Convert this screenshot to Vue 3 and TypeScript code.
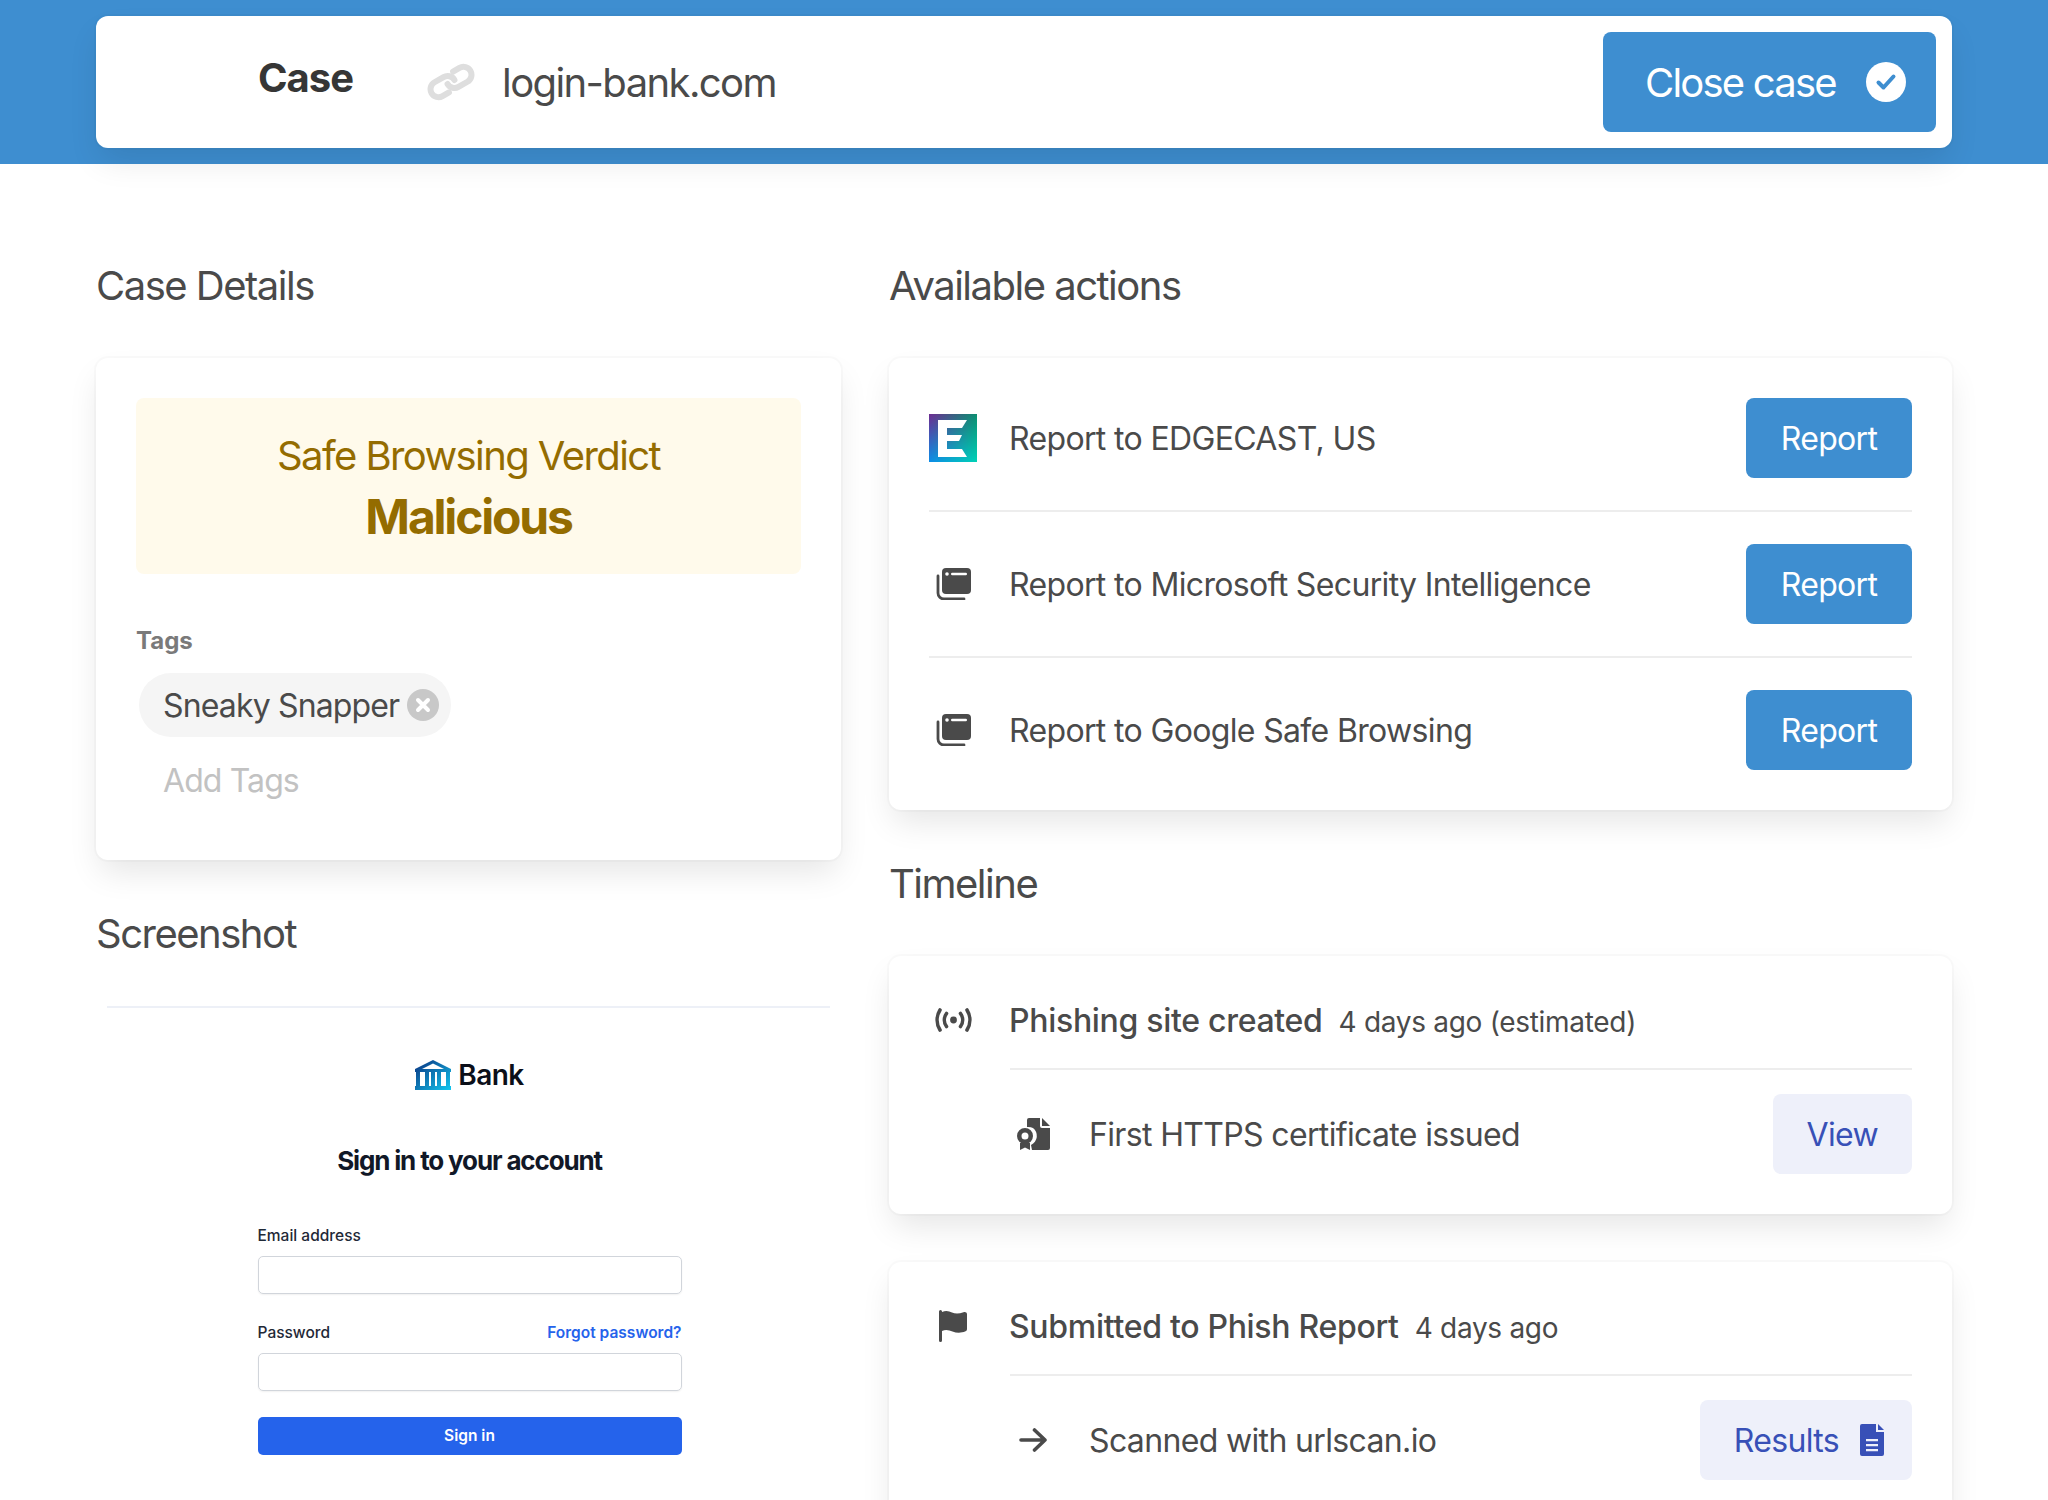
<script setup lang="ts">
const actions: { label: string; logo: boolean }[] = [
  { label: 'Report to EDGECAST, US', logo: true },
  { label: 'Report to Microsoft Security Intelligence', logo: false },
  { label: 'Report to Google Safe Browsing', logo: false },
]
</script>

<template>
  <div class="page">
    <header class="top">
      <div class="topcard">
        <span class="case">Case</span>
        <svg class="link" viewBox="0 0 48 40" fill="none" stroke="#dedede" stroke-width="6" stroke-linecap="round">
          <g transform="rotate(-30 24 20)">
            <path d="M28 20a8 8 0 0 0-8-8H9.600a8 8 0 0 0 0 16H17" />
            <path d="M20 20a8 8 0 0 0 8 8h10.400a8 8 0 0 0 0-16H31" />
          </g>
        </svg>
        <span class="domain">login-bank.com</span>
        <button class="close">
          <span>Close case</span>
          <svg class="check" viewBox="0 0 40 40">
            <circle cx="20" cy="20" r="20" fill="#fff" />
            <path d="M12.500 20.500l5 5 10-11" fill="none" stroke="#3e8ed0" stroke-width="4" stroke-linecap="round" stroke-linejoin="round" />
          </svg>
        </button>
      </div>
    </header>

    <main class="grid">
      <section>
        <h2 class="first">Case Details</h2>
        <div class="box details">
          <div class="verdict">
            <div class="v1">Safe Browsing Verdict</div>
            <div class="v2">Malicious</div>
          </div>
          <div class="tagslabel">Tags</div>
          <div class="pill">
            <span>Sneaky Snapper</span>
            <svg class="del" viewBox="0 0 32 32">
              <circle cx="16" cy="16" r="16" fill="#c8c8c8" />
              <path d="M11 11l10 10M21 11L11 21" stroke="#fff" stroke-width="4" stroke-linecap="round" />
            </svg>
          </div>
          <div class="addtags">Add Tags</div>
        </div>

        <h2>Screenshot</h2>
        <div class="shot">
          <div class="bank">
            <svg class="bankicon" viewBox="0 0 36 30">
              <defs>
                <linearGradient id="bk" x1="0" y1="0" x2="1" y2="1">
                  <stop offset="0" stop-color="#0b2f7e" />
                  <stop offset="1" stop-color="#12c8f0" />
                </linearGradient>
              </defs>
              <path fill="url(#bk)" d="M18 0L36 9v3H0V9zM18 3.500L7 9h22zM1 12h4v14H1zM10 12h4v14h-4zM22 12h4v14h-4zM31 12h4v14h-4zM16 12h4v14h-4zM0 26h36v4H0z" />
            </svg>
            <span>Bank</span>
          </div>
          <div class="signin">Sign in to your account</div>
          <form class="form" @submit.prevent>
            <label class="lab">Email address</label>
            <div class="inp"></div>
            <div class="labrow">
              <label class="lab">Password</label>
              <a class="forgot">Forgot password?</a>
            </div>
            <div class="inp"></div>
            <div class="signbtn">Sign in</div>
          </form>
        </div>
      </section>

      <section>
        <h2 class="first">Available actions</h2>
        <div class="box">
          <div v-for="a in actions" :key="a.label" class="action">
            <span class="ic">
              <svg v-if="a.logo" class="edge" viewBox="0 0 48 48">
                <defs>
                  <linearGradient id="e1" x1="0" y1="0" x2="1" y2="0">
                    <stop offset="0" stop-color="#6f2c91" />
                    <stop offset="1" stop-color="#0c8f70" />
                  </linearGradient>
                  <linearGradient id="e2" x1="0" y1="0" x2="1" y2="0">
                    <stop offset="0" stop-color="#0b8de8" />
                    <stop offset="1" stop-color="#00d2b6" />
                  </linearGradient>
                  <linearGradient id="mask" x1="0" y1="0" x2="0" y2="1">
                    <stop offset="0" stop-color="#fff" stop-opacity="0" />
                    <stop offset="1" stop-color="#fff" stop-opacity="1" />
                  </linearGradient>
                  <mask id="m"><rect width="48" height="48" fill="url(#mask)" /></mask>
                </defs>
                <rect width="48" height="48" fill="url(#e1)" />
                <rect width="48" height="48" fill="url(#e2)" mask="url(#m)" />
                <path fill="#fff" d="M9 6h29l-5 8H18v7h15l-3 6H18v8h15l5 8H9z" />
              </svg>
              <svg v-else class="stack" viewBox="0 0 36 32">
                <path d="M3 8v17a6 6 0 0 0 6 6h20" fill="none" stroke="#4a4a4a" stroke-width="2.800" stroke-linecap="round" />
                <rect x="7" y="0" width="29" height="26" rx="4" fill="#4a4a4a" />
                <circle cx="12" cy="6" r="1.800" fill="#fff" />
                <rect x="16" y="4.800" width="16" height="2.400" rx="1.200" fill="#fff" />
              </svg>
            </span>
            <span class="atext">{{ a.label }}</span>
            <button class="primary">Report</button>
          </div>
        </div>

        <h2>Timeline</h2>
        <div class="box tl">
          <div class="thead">
            <span class="ic">
              <svg class="broad" viewBox="0 0 37 24" fill="none" stroke="#4a4a4a" stroke-width="3.600" stroke-linecap="round">
                <circle cx="18.500" cy="12" r="3.400" fill="#4a4a4a" stroke="none" />
                <path d="M11.500 5.500a11 11 0 0 0 0 13M25.500 5.500a11 11 0 0 1 0 13M5 2a19 19 0 0 0 0 20M32 2a19 19 0 0 1 0 20" />
              </svg>
            </span>
            <span class="ttext"><b>Phishing site created</b><span class="ago">4 days ago (estimated)</span></span>
          </div>
          <div class="tbody">
            <span class="ic">
              <svg class="cert" viewBox="0 0 33 32">
                <path fill="#4a4a4a" d="M10 2a2 2 0 0 1 2-2h11v8a2 2 0 0 0 2 2h8v20a2 2 0 0 1-2 2H15l-1-5a10 10 0 0 0 2-17 10 10 0 0 0-6-1z" />
                <path fill="#4a4a4a" d="M25 0l8 8h-8z" />
                <path fill="#4a4a4a" fill-rule="evenodd" d="M8 10a8 8 0 1 1 0 16 8 8 0 0 1 0-16zm0 4.500a3.500 3.500 0 1 0 0 7 3.500 3.500 0 0 0 0-7z" />
                <path fill="#4a4a4a" d="M3 25l0 7 5-2.500L13 32v-7z" />
              </svg>
            </span>
            <span class="stext">First HTTPS certificate issued</span>
            <button class="light">View</button>
          </div>
        </div>

        <div class="box tl second">
          <div class="thead">
            <span class="ic">
              <svg class="flag" viewBox="0 0 28 32">
                <path fill="#4a4a4a" d="M0 1.500a1.500 1.500 0 0 1 3 0V2c4-2 7-1 10 .5S20 4 24.500 2.300c1.700-.6 3.500.2 3.500 2V19c0 1.200-.6 1.800-1.500 2.300-4.500 2-9 1.800-13 .2-3.500-1.400-7-2-10.500-.5v9.500a1.500 1.500 0 0 1-3 0z" />
              </svg>
            </span>
            <span class="ttext"><b>Submitted to Phish Report</b><span class="ago">4 days ago</span></span>
          </div>
          <div class="tbody">
            <span class="ic">
              <svg class="arrow" viewBox="0 0 28 24" fill="none" stroke="#4a4a4a" stroke-width="3.600" stroke-linecap="round" stroke-linejoin="round">
                <path d="M2 12h24M15.500 2L26 12 15.500 22" />
              </svg>
            </span>
            <span class="stext">Scanned with urlscan.io</span>
            <button class="light results">
              <span>Results</span>
              <svg class="doc" viewBox="0 0 24 32">
                <path fill="#3850b7" d="M2 0h14v8h8v22a2 2 0 0 1-2 2H2a2 2 0 0 1-2-2V2a2 2 0 0 1 2-2z" />
                <path fill="#3850b7" d="M18 0l6 6h-6z" />
                <path fill="#eef0fa" d="M6 15h12v2.200H6zM6 20h12v2.200H6zM6 25h12v2.200H6z" />
              </svg>
            </button>
          </div>
        </div>
      </section>
    </main>
  </div>
</template>

<style>
html, body { margin: 0; background: #fff; }
</style>

<style scoped>
.page {
  height: 1500px;
  overflow: hidden;
  font-family: Inter, "Liberation Sans", sans-serif;
  color: #4a4a4a;
  background: #fff;
}
button { font-family: inherit; border: 0; cursor: pointer; }
.top {
  background: #3e8ed0;
  height: 164px;
  padding: 16px 96px;
  box-sizing: border-box;
}
.topcard {
  height: 132px;
  box-sizing: border-box;
  background: #fff;
  border-radius: 12px;
  padding: 16px 16px 16px 162px;
  display: flex;
  align-items: center;
  box-shadow: 0 16px 32px -4px rgba(10, 10, 10, .1), 0 0 0 2px rgba(10, 10, 10, .02);
}
.case {
  font-size: 40px;
  font-weight: 700;
  letter-spacing: -1px;
  color: #363636;
  margin-bottom: 10px;
}
.link { width: 48px; height: 40px; margin-left: 74px; }
.domain { font-size: 40px; letter-spacing: -1.600px; margin-left: 27px; color: #4a4a4a; flex: 1; }
.close {
  width: 333px;
  height: 100px;
  box-sizing: border-box;
  padding: 0 30px 0 42px;
  border-radius: 8px;
  background: #3e8ed0;
  color: #fff;
  font-size: 40px;
  letter-spacing: -1.800px;
  display: flex;
  align-items: center;
  justify-content: space-between;
}
.check { width: 40px; height: 40px; }
.grid {
  display: grid;
  grid-template-columns: 745px 1063px;
  gap: 48px;
  padding: 0 96px;
}
h2 {
  margin: 47px 0 45px;
  font-size: 40px;
  letter-spacing: -1.500px;
  line-height: 54px;
  font-weight: 400;
  color: #4a4a4a;
}
h2.first { margin-top: 95px; }
.box {
  background: #fff;
  border-radius: 12px;
  padding: 40px;
  box-shadow: 0 16px 32px -4px rgba(10, 10, 10, .1), 0 0 0 2px rgba(10, 10, 10, .02);
}
.details { padding-bottom: 55px; }
.verdict {
  background: #fffaeb;
  color: #946c00;
  border-radius: 8px;
  text-align: center;
  padding: 28px 0 26px;
}
.v1 { font-size: 40px; letter-spacing: -1.600px; line-height: 60px; }
.v2 { font-size: 48px; letter-spacing: -2.200px; line-height: 62px; font-weight: 700; }
.tagslabel {
  margin-top: 51px;
  font-size: 24px;
  line-height: 32px;
  font-weight: 700;
  color: #7a7a7a;
}
.pill {
  margin: 16px 0 0 3px;
  height: 64px;
  width: 312px;
  box-sizing: border-box;
  border-radius: 32px;
  background: #f5f5f5;
  padding: 0 12px 0 24px;
  display: flex;
  align-items: center;
  justify-content: space-between;
  font-size: 32px;
  letter-spacing: -.850px;
  white-space: nowrap;
}
.del { width: 32px; height: 32px; flex: none; }
.addtags {
  margin: 20px 0 0 27px;
  font-size: 32px;
  letter-spacing: -.900px;
  line-height: 48px;
  color: #c2c2c2;
}
.shot {
  border-top: 2px solid #edf0f7;
  margin: 0 11px;
  padding-left: 2px;
  height: 500px;
}
.bank {
  display: flex;
  justify-content: center;
  align-items: center;
  gap: 7px;
  margin-top: 52px;
  height: 30px;
  font-size: 28px;
  font-weight: 600;
  color: #0b0f19;
  letter-spacing: -.500px;
}
.bankicon { width: 36px; height: 30px; }
.signin {
  margin-top: 55px;
  text-align: center;
  font-size: 26px;
  line-height: 32px;
  font-weight: 700;
  letter-spacing: -1.150px;
  color: #111827;
}
.form { width: 424px; margin: 49px auto 0; }
.lab, .forgot {
  font-size: 15.500px;
  line-height: 20px;
  font-weight: 500;
  color: #1f2937;
  display: block;
}
.labrow {
  display: flex;
  justify-content: space-between;
  margin-top: 29px;
}
.forgot { color: #2563eb; font-weight: 600; }
.inp {
  box-sizing: border-box;
  height: 38px;
  margin-top: 10px;
  border: 1px solid #d1d5db;
  border-radius: 5px;
  box-shadow: 0 1px 2px rgba(0, 0, 0, .06);
}
.signbtn {
  height: 38px;
  margin-top: 26px;
  background: #2563eb;
  color: #fff;
  border-radius: 5px;
  font-size: 15.500px;
  line-height: 38px;
  font-weight: 600;
  text-align: center;
}
.action {
  display: flex;
  align-items: center;
  padding: 32px 0;
  border-bottom: 2px solid #ededed;
  font-size: 32px;
  letter-spacing: -.650px;
}
.action:first-child { padding-top: 0; }
.action:last-child { padding-bottom: 0; border-bottom: 0; }
.ic {
  width: 48px;
  height: 48px;
  flex: none;
  display: flex;
  align-items: center;
  justify-content: center;
}
.edge { width: 48px; height: 48px; }
.stack { width: 36px; height: 32px; }
.atext { margin-left: 32px; flex: 1; }
.primary {
  width: 166px;
  height: 80px;
  border-radius: 8px;
  background: #3e8ed0;
  color: #fff;
  font-size: 32px;
  letter-spacing: -.650px;
}
.thead {
  display: flex;
  align-items: center;
  height: 48px;
  font-size: 32px;
}
.ttext { margin-left: 32px; }
.ttext b { font-weight: 500; letter-spacing: -.300px; }
.ago { font-size: 28px; letter-spacing: -.300px; margin-left: 16px; }
.tbody {
  display: flex;
  align-items: center;
  margin: 24px 0 0 81px;
  padding-top: 24px;
  border-top: 2px solid #ededed;
  font-size: 32px;
  letter-spacing: -.650px;
}
.stext { margin-left: 33px; flex: 1; }
.tbody .ic { width: 46px; }
.broad { width: 37px; height: 24px; }
.cert { width: 33px; height: 32px; }
.flag { width: 28px; height: 32px; }
.arrow { width: 28px; height: 24px; }
.second { margin-top: 48px; }
.light {
  height: 80px;
  padding: 0 34px;
  border-radius: 8px;
  background: #eef0fa;
  color: #3850b7;
  font-size: 32px;
  letter-spacing: -.650px;
  display: flex;
  align-items: center;
  gap: 21px;
}
.results { padding-right: 28px; }
.doc { width: 24px; height: 32px; }
</style>
